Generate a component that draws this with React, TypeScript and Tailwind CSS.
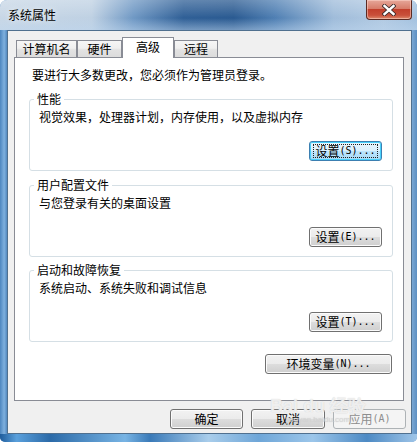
import type { ReactNode } from "react";

const cjk = "font-['Noto_Sans_CJK_SC','Noto_Sans',sans-serif]";

function Key({ k }: { k: string }) {
  return (
    <span className="font-['DejaVu_Sans_Mono',monospace] text-[10px] leading-none">
      ({k})...
    </span>
  );
}

function Btn({
  children,
  w,
  focused,
  disabled,
}: {
  children: ReactNode;
  w: string;
  focused?: boolean;
  disabled?: boolean;
}) {
  if (disabled) {
    return (
      <div
        className={`${w} flex h-[20px] items-center justify-center rounded-[3px] border border-[#adb2b5] bg-[#f4f4f4] text-[12px] text-[#8d8d8d]`}
      >
        {children}
      </div>
    );
  }
  return (
    <div
      className={`${w} flex h-[20px] items-center justify-center rounded-[3px] border text-[12px] text-black ${
        focused
          ? "border-[#3c7fb1] bg-[linear-gradient(180deg,#eaf6fd_0%,#d9f0fc_50%,#bee6fd_50%,#a7d9f5_100%)] shadow-[inset_0_0_0_1px_#48d1fb]"
          : "border-[#707070] bg-[linear-gradient(180deg,#f2f2f2_0%,#ebebeb_50%,#dddddd_50%,#cfcfcf_100%)] shadow-[inset_0_0_0_1px_#fbfbfb]"
      }`}
    >
      {focused ? (
        <span className="flex h-[14px] w-[calc(100%-6px)] items-center justify-center border border-dotted border-[#222]">
          {children}
        </span>
      ) : (
        children
      )}
    </div>
  );
}

function Group({
  title,
  desc,
  button,
  className,
}: {
  title: string;
  desc: string;
  button: ReactNode;
  className?: string;
}) {
  return (
    <div
      className={`flex h-[72px] flex-col rounded-[3px] border border-[#d5dfe5] ${className ?? ""}`}
    >
      <div className="-mt-[9px] ml-[4px] self-start bg-white px-[3px] text-[12px] leading-[16px]">
        {title}
      </div>
      <div className="ml-[9px] mt-[2px] text-[12px] leading-[16px]">{desc}</div>
      <div className="mb-[9px] mr-[10px] mt-auto self-end">{button}</div>
    </div>
  );
}

const tabBase =
  "flex items-center justify-center border border-b-0 border-[#898c95] text-[12px] leading-none";
const tabOff = `${tabBase} h-[17px] bg-[linear-gradient(180deg,#f6f6f6_0%,#efefef_45%,#e2e2e2_55%,#dcdcdc_100%)]`;

export default function App() {
  return (
    <div className={`h-[444px] w-[417px] bg-white ${cjk}`}>
      <div className="flex h-[442px] w-[417px] flex-col overflow-hidden rounded-t-[7px] rounded-b-[5px] bg-[linear-gradient(90deg,#4d86bf_0%,#7fb0de_1%,#3f77b1_2%,#7aa7d3_40%,#a8c6e4_80%,#8db7de_98%,#5d8fc2_100%)]">
        {/* title bar */}
        <div className="flex h-[30px] items-start justify-between bg-[linear-gradient(180deg,rgba(255,255,255,0.25)_0%,rgba(255,255,255,0)_60%,rgba(190,214,238,0.5)_100%),linear-gradient(90deg,#c8d7e6_0%,#bfd1e3_22%,#6f98c4_32%,#2f5f96_44%,#2a5a91_56%,#4f7fb3_66%,#9fbcda_80%,#b2cae2_92%,#a3c1df_100%)]">
          <div className="pl-[8px] pt-[8px] text-[12px] leading-[14px] text-black [text-shadow:0_0_6px_rgba(255,255,255,0.9)]">
            系统属性
          </div>
          <div className="mr-[5px] flex h-[20px] w-[46px] items-center justify-center rounded-b-[4px] border border-t-0 border-[#5b2a22] bg-[linear-gradient(180deg,#e6a799_0%,#d77d6a_45%,#c2402c_50%,#c9503a_80%,#dd8a6c_100%)] shadow-[inset_0_0_0_1px_rgba(255,220,210,0.5)]">
            <svg width="14" height="12" viewBox="0 0 14 12">
              <path
                d="M2.5 2 L11.5 10 M11.5 2 L2.5 10"
                stroke="#3a2a2a"
                strokeWidth="4.2"
                strokeLinecap="square"
              />
              <path
                d="M2.5 2 L11.5 10 M11.5 2 L2.5 10"
                stroke="#ffffff"
                strokeWidth="2.4"
                strokeLinecap="square"
              />
            </svg>
          </div>
        </div>

        {/* client row */}
        <div className="flex flex-1">
          <div className="w-[7px]" />
          <div className="flex w-[405px] flex-col border border-[#50708f] bg-[#f0f0f0]">
            {/* tabs */}
            <div className="ml-[8px] mt-[6px] flex h-[20px] items-end">
              <div className={`${tabOff} w-[61px]`}>计算机名</div>
              <div className={`${tabOff} w-[45px]`}>硬件</div>
              <div
                className={`${tabBase} relative z-10 -mb-[1px] h-[21px] w-[52px] bg-white pb-[2px]`}
              >
                高级
              </div>
              <div className={`${tabOff} w-[44px]`}>远程</div>
            </div>

            {/* panel */}
            <div className="ml-[6px] flex h-[344px] w-[390px] flex-col border border-[#898c95] bg-white pl-[14px] pr-[10px]">
              <div className="ml-[3px] mt-[9px] text-[12px] leading-[16px]">
                要进行大多数更改，您必须作为管理员登录。
              </div>
              <Group
                className="mt-[16px]"
                title="性能"
                desc="视觉效果，处理器计划，内存使用，以及虚拟内存"
                button={
                  <Btn w="w-[73px]" focused>
                    设置<Key k="S" />
                  </Btn>
                }
              />
              <Group
                className="mt-[14px]"
                title="用户配置文件"
                desc="与您登录有关的桌面设置"
                button={
                  <Btn w="w-[73px]">
                    设置<Key k="E" />
                  </Btn>
                }
              />
              <Group
                className="mt-[13px]"
                title="启动和故障恢复"
                desc="系统启动、系统失败和调试信息"
                button={
                  <Btn w="w-[73px]">
                    设置<Key k="T" />
                  </Btn>
                }
              />
              <div className="mr-[1px] mt-[12px] self-end">
                <Btn w="w-[127px]">
                  环境变量<Key k="N" />
                </Btn>
              </div>
            </div>

            {/* dialog buttons */}
            <div className="relative mr-[5px] mt-[8px] flex justify-end gap-[8px]">
              <Btn w="w-[73px]">确定</Btn>
              <Btn w="w-[74px]">取消</Btn>
              <Btn w="w-[73px]" disabled>
                应用<span className="font-['DejaVu_Sans_Mono',monospace] text-[10px] leading-none">(A)</span>
              </Btn>
              {/* watermark */}
              <div className="pointer-events-none absolute -top-[12px] right-[40px] flex flex-col items-center text-white/70 [text-shadow:0_0_1px_#c8c8c8]">
                <span className="font-['Liberation_Sans',sans-serif] text-[18px] font-bold leading-[18px]">
                  Bai du 经验
                </span>
                <span className="font-['Liberation_Sans',sans-serif] text-[8px] leading-[10px] text-[#d8d8d8]/70">
                  jingyan.baidu.com
                </span>
              </div>
            </div>
          </div>
          <div className="w-[5px]" />
        </div>

        {/* bottom frame */}
        <div className="h-[8px] bg-[linear-gradient(90deg,#1f5c9b_0%,#5aa0dc_4%,#2b6aa8_12%,#78b4e4_30%,#3a7ab8_36%,#a9cdeb_50%,#6ea6d8_62%,#9cc6ea_75%,#4d8ac4_88%,#9fc5e8_100%)]" />
      </div>
    </div>
  );
}
